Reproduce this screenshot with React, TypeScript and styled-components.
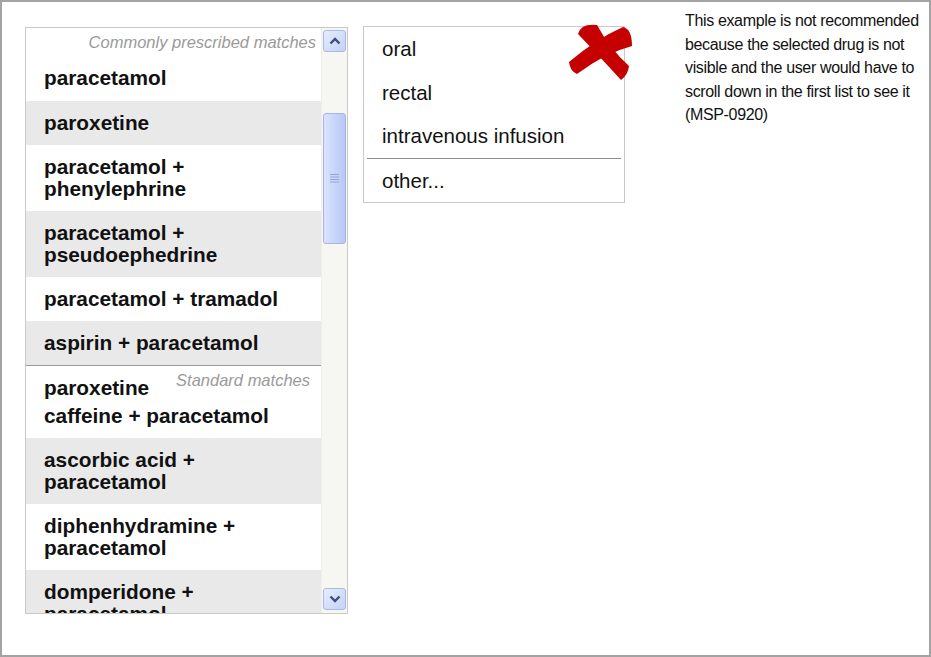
import React from 'react';
import styled, { createGlobalStyle } from 'styled-components';

const GlobalStyle = createGlobalStyle`
  body {
    margin: 0;
    background: #fff;
    font-family: "Liberation Sans", Arial, sans-serif;
    color: #111;
  }
`;

interface Group {
    label: string;
    labelRight: number;
    rows: string[][];
}

const groups: Group[] = [
    {
        label: 'Commonly prescribed matches',
        labelRight: 5,
        rows: [
            ['paracetamol'],
            ['paroxetine'],
            ['paracetamol +', 'phenylephrine'],
            ['paracetamol +', 'pseudoephedrine'],
            ['paracetamol + tramadol'],
            ['aspirin + paracetamol'],
        ],
    },
    {
        label: 'Standard matches',
        labelRight: 11,
        rows: [
            ['paroxetine', 'caffeine + paracetamol'],
            ['ascorbic acid +', 'paracetamol'],
            ['diphenhydramine +', 'paracetamol'],
            ['domperidone +', 'paracetamol'],
        ],
    },
];

const routes = ['oral', 'rectal', 'intravenous infusion'];

const Frame = styled.div`
  width: 931px;
  height: 657px;
  box-sizing: border-box;
  border: 2px solid #a3a3a3;
  display: flex;
  align-items: flex-start;
  padding: 25px 0 0 23px;
  overflow: hidden;
`;

const DrugList = styled.div`
  width: 323px;
  height: 587px;
  box-sizing: border-box;
  border: 1px solid #c9c9c9;
  display: flex;
  flex-shrink: 0;
`;

const Rows = styled.div`
  width: 295px;
  overflow: hidden;
`;

const GroupBlock = styled.div<{ $divider: boolean }>`
  border-top: ${(p) => (p.$divider ? '1px solid #9a9a9a' : 'none')};
`;

const Row = styled.div<{ $shaded: boolean; $first: boolean }>`
  background: ${(p) => (p.$shaded ? '#e9e9e9' : '#fff')};
  padding: 11px 0 ${(p) => (p.$first ? 12 : 11)}px 18px;
  font-size: 20.8px;
  font-weight: bold;
  line-height: 22px;
  display: flow-root;
`;

const Line = styled.span`
  display: inline-block;
  white-space: nowrap;
`;

const GroupLabel = styled.span<{ $right: number }>`
  float: right;
  margin: -8px ${(p) => p.$right}px 14px 12px;
  font-size: 16.5px;
  font-weight: normal;
  font-style: italic;
  white-space: nowrap;
  color: #9a9a9a;
  line-height: 22px;
`;

const Track = styled.div`
  width: 26px;
  box-sizing: border-box;
  background: #f6f6f2;
  border-left: 1px solid #eeeeea;
  display: flex;
  flex-direction: column;
  padding: 2px 1px 3px 1px;
`;

const ScrollButton = styled.div`
  height: 22px;
  box-sizing: border-box;
  border: 1px solid #a9b8e6;
  border-radius: 3px;
  background: linear-gradient(135deg, #e6edfd 0%, #c4d2f8 100%);
  display: flex;
  align-items: center;
  justify-content: center;
`;

const Thumb = styled.div`
  margin-top: 61px;
  height: 131px;
  box-sizing: border-box;
  border: 1px solid #a5b5e8;
  border-radius: 3px;
  background: linear-gradient(90deg, #dbe4fd 0%, #c8d5fb 50%, #b9c8f6 100%);
  display: flex;
  align-items: center;
  justify-content: center;
`;

const Spacer = styled.div`
  flex: 1;
`;

const RouteMenu = styled.div`
  position: relative;
  margin: -1px 0 0 15px;
  width: 262px;
  box-sizing: border-box;
  border: 1px solid #c9c9c9;
  flex-shrink: 0;
`;

const RouteItem = styled.div`
  height: 43.5px;
  line-height: 43.5px;
  padding-left: 18px;
  font-size: 20.5px;
`;

const MenuDivider = styled.div`
  height: 1px;
  margin: 0 3px;
  background: #8c8c8c;
`;

const RejectMark = styled.svg`
  position: absolute;
  left: 205px;
  top: -4px;
`;

const Note = styled.div`
  margin: -18px 0 0 60px;
  font-size: 16px;
  letter-spacing: -0.35px;
  line-height: 23.5px;
  white-space: nowrap;
`;

const Chevron: React.FC<{ up: boolean }> = ({ up }) => (
    <svg width="12" height="8" viewBox="0 0 12 8">
        <polyline
            points={up ? '1.5,6.5 6,2 10.5,6.5' : '1.5,1.5 6,6 10.5,1.5'}
            fill="none"
            stroke="#3f4f7d"
            strokeWidth="2.4"
        />
    </svg>
);

const Grip = () => (
    <svg width="9" height="9" viewBox="0 0 9 9">
        {[1, 3.5, 6, 8.5].map((y) => (
            <line key={y} x1="0" x2="9" y1={y - 0.5} y2={y - 0.5} stroke="#93a6e0" strokeWidth="1" />
        ))}
    </svg>
);

const App: React.FC = () => {
    return (
        <>
            <GlobalStyle />
            <Frame>
                <DrugList>
                    <Rows>
                        {groups.map((group, gi) => (
                            <GroupBlock key={group.label} $divider={gi > 0}>
                                {group.rows.map((lines, ri) => (
                                    <Row key={ri} $shaded={ri % 2 === 1} $first={ri === 0 && gi === 0}>
                                        {ri === 0 && <GroupLabel $right={group.labelRight}>{group.label}</GroupLabel>}
                                        {lines.map((line, li) => (
                                            <React.Fragment key={li}>
                                                <Line>{line}</Line>
                                                {li < lines.length - 1 && <br />}
                                            </React.Fragment>
                                        ))}
                                    </Row>
                                ))}
                            </GroupBlock>
                        ))}
                    </Rows>
                    <Track>
                        <ScrollButton>
                            <Chevron up />
                        </ScrollButton>
                        <Thumb>
                            <Grip />
                        </Thumb>
                        <Spacer />
                        <ScrollButton>
                            <Chevron up={false} />
                        </ScrollButton>
                    </Track>
                </DrugList>

                <RouteMenu>
                    {routes.map((r) => (
                        <RouteItem key={r}>{r}</RouteItem>
                    ))}
                    <MenuDivider />
                    <RouteItem>other...</RouteItem>
                    <RejectMark width="64" height="58" viewBox="0 0 64 58">
                        <path
                            d="M9,11 Q12,0 28,2 Q41,26 60,43 Q59,52 52,57 Q33,36 9,11 Z"
                            fill="#c40000"
                        />
                        <path
                            d="M54,4 Q63,6 63,23 Q36,30 8,51 Q1,48 0,39 Q27,16 54,4 Z"
                            fill="#c40000"
                        />
                    </RejectMark>
                </RouteMenu>

                <Note>
                    This example is not recommended
                    <br />
                    because the selected drug is not
                    <br />
                    visible and the user would have to
                    <br />
                    scroll down in the first list to see it
                    <br />
                    (MSP-0920)
                </Note>
            </Frame>
        </>
    );
};

export default App;
